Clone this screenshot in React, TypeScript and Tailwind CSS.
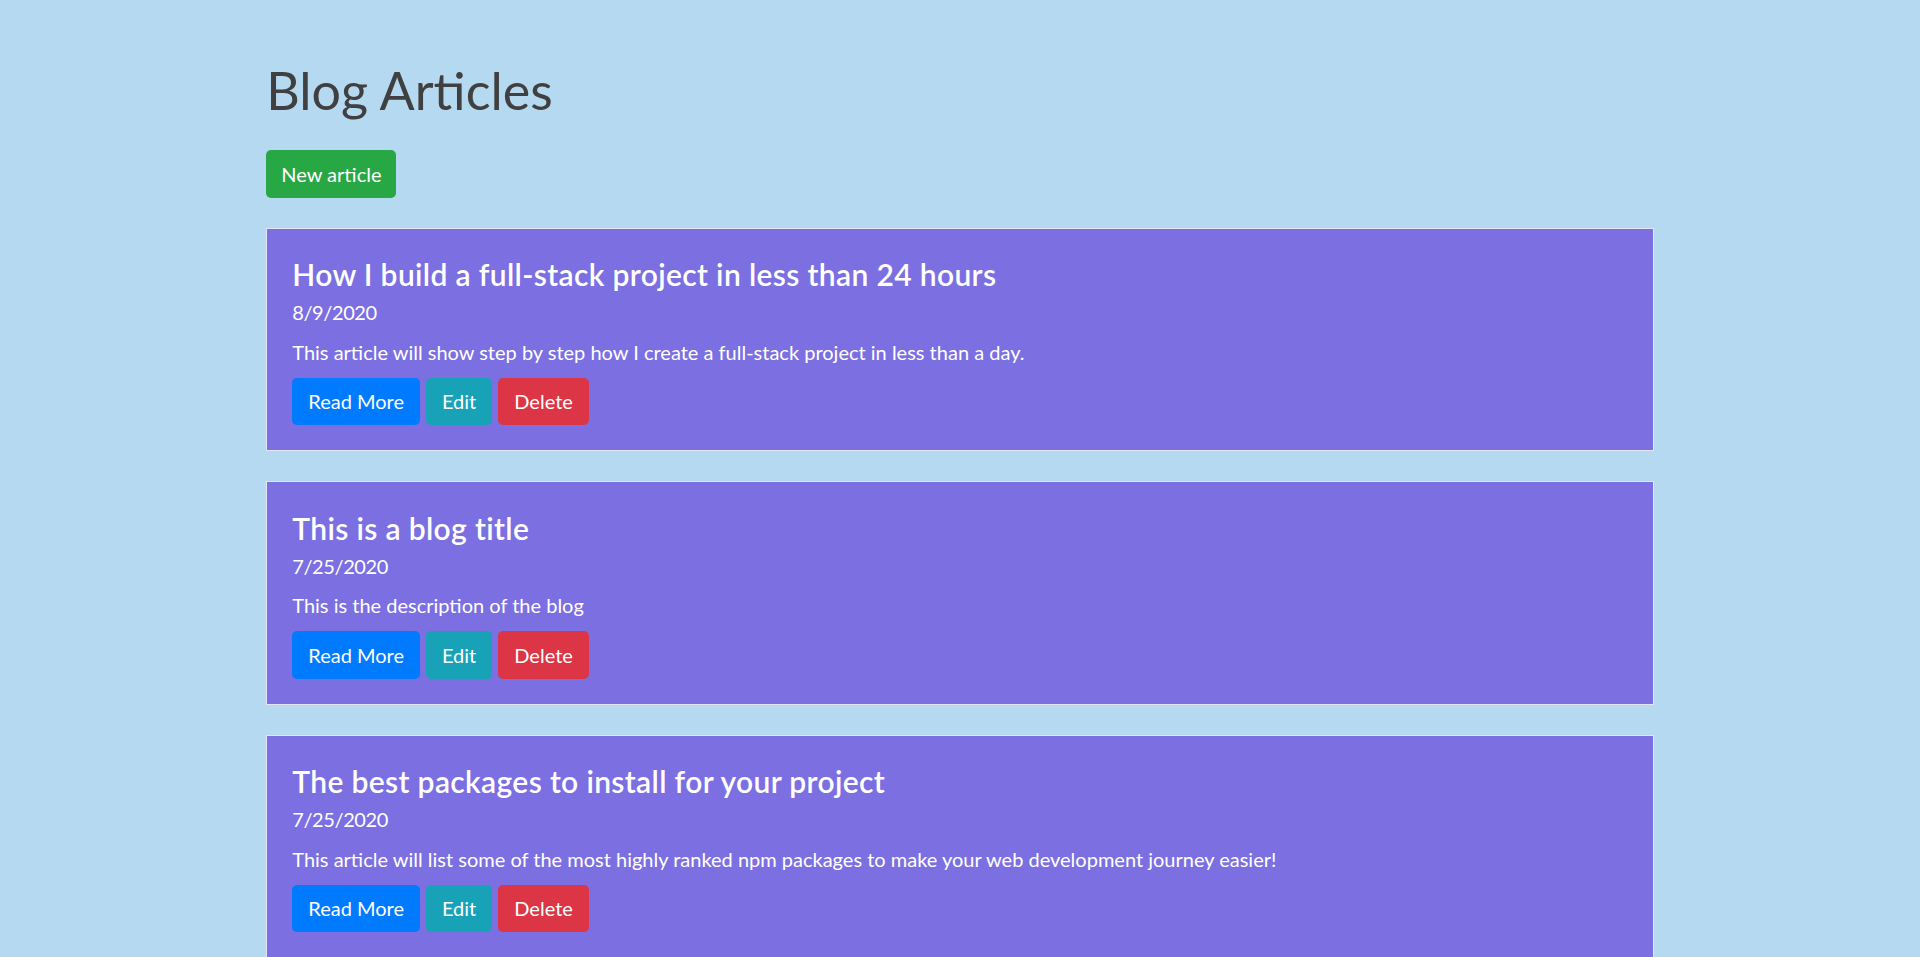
import React from "react";

const articles = [
  {
    title: "How I build a full-stack project in less than 24 hours",
    date: "8/9/2020",
    desc: "This article will show step by step how I create a full-stack project in less than a day.",
  },
  {
    title: "This is a blog title",
    date: "7/25/2020",
    desc: "This is the description of the blog",
  },
  {
    title: "The best packages to install for your project",
    date: "7/25/2020",
    desc: "This article will list some of the most highly ranked npm packages to make your web development journey easier!",
  },
];

export default function App() {
  return (
    <div
      className="min-h-screen bg-[#b5d9f1]"
      style={{ fontFamily: '"Lato", "Noto Sans", sans-serif' }}
    >
      <div className="mx-auto w-[1387.5px] pt-[60px]">
        <h1 className="text-[52px] leading-[60px] font-normal text-[#404040] mb-[30px]">
          Blog Articles
        </h1>
        <button className="h-[47.5px] px-[15px] rounded-[5px] bg-[#28a745] text-white text-[20px] leading-[30px]">
          New article
        </button>
        <div className="mt-[30px] flex flex-col gap-[30px]">
          {articles.map((a) => (
            <div
              key={a.title}
              className="bg-[#7b6fe2] border border-[#e6e4f2] px-[25px] pt-[27.5px] pb-[25px] text-white"
            >
              <h4 className="text-[30px] leading-[36px] font-semibold tracking-[0.35px] mb-[5px]">
                {a.title}
              </h4>
              <div className="text-[20px] leading-[30px] tracking-[-0.4px] mb-[9.5px]">{a.date}</div>
              <p className="text-[20px] leading-[30px] mb-[11px]">{a.desc}</p>
              <div className="flex gap-[6px]">
                <button className="h-[47.5px] px-[16px] rounded-[5px] bg-[#007bff] text-white text-[20px]">
                  Read More
                </button>
                <button className="h-[47.5px] px-[16px] rounded-[5px] bg-[#17a2b8] text-white text-[20px]">
                  Edit
                </button>
                <button className="h-[47.5px] px-[16px] rounded-[5px] bg-[#dc3545] text-white text-[20px]">
                  Delete
                </button>
              </div>
            </div>
          ))}
        </div>
      </div>
    </div>
  );
}
